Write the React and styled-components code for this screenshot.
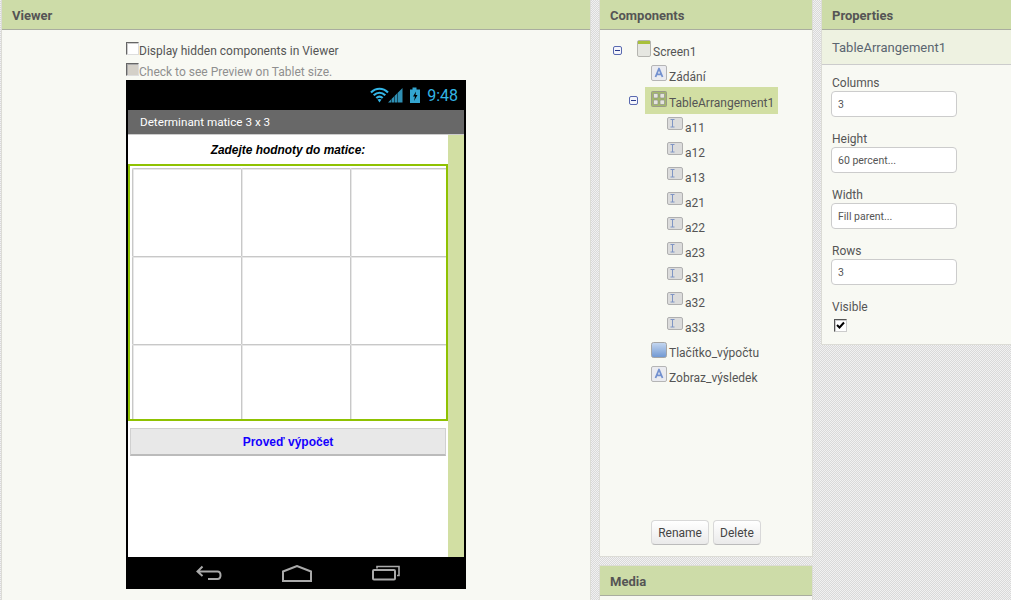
import React from 'react';
import styled, { createGlobalStyle } from 'styled-components';

const GlobalStyle = createGlobalStyle`
  html, body {
    margin: 0;
    height: 100%;
    overflow: hidden;
  }
  body {
    font-family: Roboto, "Liberation Sans", sans-serif;
    color: #555;
    background: repeating-conic-gradient(#d9d9d9 0 25%, #f1f1f1 0 50%) 0 0 / 2px 2px;
  }
`;

const Page = styled.div`
  display: flex;
  height: 600px;
  width: 1011px;
  overflow: hidden;
  padding-left: 2px;
  box-sizing: border-box;
`;

const Column = styled.div`
  width: ${(props) => props.width}px;
  margin-right: ${(props) => props.gap || 0}px;
  flex-shrink: 0;
  display: flex;
  flex-direction: column;
`;

const Panel = styled.section`
  display: flex;
  flex-direction: column;
  flex: ${(props) => (props.grow ? '1' : 'none')};
  height: ${(props) => (props.height ? `${props.height}px` : 'auto')};
  margin-bottom: ${(props) => props.bottom || 0}px;
  background: #f8f9f3;
  box-shadow: 0 0 0 1px #dcdcd6;
`;

const PanelHeader = styled.h2`
  margin: 0;
  height: 29px;
  line-height: 31px;
  padding-left: 10px;
  flex-shrink: 0;
  font-size: 13px;
  font-weight: 700;
  color: #555;
  background: #cddca8;
  border-bottom: 1px solid #a9ad9f;
`;

const ViewerBody = styled.div`
  flex: 1;
  padding: 12px 0 0 124px;
`;

const CheckLine = styled.div`
  display: flex;
  align-items: flex-start;
  height: 21px;
  font-size: 12px;
  line-height: 19px;
  color: ${(props) => (props.disabled ? '#8f8f8f' : '#555')};
`;

const Box = styled.span`
  display: block;
  box-sizing: border-box;
  width: 13px;
  height: 13px;
  flex-shrink: 0;
  background: ${(props) => (props.disabled ? '#d4d0c8' : '#fff')};
  border: 1px solid;
  border-color: #666 #ddd #ddd #666;
  box-shadow: inset 1px 1px 0 ${(props) => (props.disabled ? '#aaa' : '#ccc')};
`;

const Phone = styled.div`
  width: 340px;
  height: 509px;
  box-sizing: border-box;
  padding: 0 2px;
  background: #000;
  display: flex;
  flex-direction: column;
  margin-top: -4px;
`;

const StatusBar = styled.div`
  height: 30px;
  flex-shrink: 0;
  display: flex;
  align-items: center;
  justify-content: flex-end;
  padding-right: 6px;
  color: #33b5e5;
  font-size: 16px;
  gap: 6px;
`;

const TitleBar = styled.div`
  height: 24px;
  line-height: 25px;
  flex-shrink: 0;
  padding-left: 12px;
  background: #686868;
  color: #fff;
  font-size: 11.7px;
  border-bottom: 1px solid #ccc;
`;

const Screen = styled.div`
  flex: 1;
  display: flex;
  min-height: 0;
  background: #fff;
`;

const ScreenContent = styled.div`
  width: 320px;
`;

const ScrollStrip = styled.div`
  flex: 1;
  background: #d2dfa3;
`;

const Prompt = styled.div`
  height: 29px;
  text-align: center;
  font: italic 700 11.9px/31px "Liberation Sans", Arial, sans-serif;
  color: #000;
`;

const MatrixFrame = styled.div`
  box-sizing: border-box;
  height: 257px;
  padding: 2px 0 0 2px;
  border: 2px solid #8fc202;
  display: grid;
  grid-template-columns: 109px 109px 96px;
  grid-template-rows: 88px 88px 75px;
`;

const Cell = styled.div`
  background: #fff;
  border-top: 1px solid #c8c8c8;
  border-left: 1px solid #c8c8c8;
  border-radius: 2px 0 0 0;
  box-shadow: inset 0 1px 0 #e8e8e8, inset 1px 0 0 #e8e8e8;
`;

const ComputeButton = styled.div`
  box-sizing: border-box;
  width: 316px;
  height: 28px;
  margin: 7px 0 0 2px;
  background: #e8e8e8;
  border: 1px solid #d0d0d0;
  border-bottom: 2px solid #bbb;
  text-align: center;
  font: 700 12px/26px "Liberation Sans", Arial, sans-serif;
  color: #1400ff;
`;

const NavBar = styled.div`
  height: 32px;
  margin: 0 -2px;
  flex-shrink: 0;
  background: #000;
  display: flex;
  align-items: center;
  padding-left: 70px;
  gap: 59px;
`;

const ComponentsBody = styled.div`
  flex: 1;
  display: flex;
  flex-direction: column;
  padding-top: 8px;
`;

const Tree = styled.div`
  flex: 1;
`;

const TreeRow = styled.div`
  display: flex;
  align-items: center;
  height: 25px;
  padding-left: ${(props) => props.indent}px;
`;

const Toggle = styled.span`
  box-sizing: border-box;
  width: 9px;
  height: 9px;
  margin-right: ${(props) => props.after}px;
  border: 1px solid #5a6ab0;
  border-radius: 2px;
  background: #f4f5fb;
  display: flex;
  align-items: center;
  justify-content: center;
  flex-shrink: 0;
  &::after {
    content: '';
    width: 5px;
    height: 1px;
    background: #2a3a8a;
  }
`;

const NodeBody = styled.div`
  display: flex;
  align-items: flex-start;
  box-sizing: border-box;
  height: ${(props) => (props.selected ? '27px' : '25px')};
  padding-left: ${(props) => (props.selected ? '6px' : '0')};
  padding-top: ${(props) => (props.selected ? '4px' : '2px')};
  width: ${(props) => (props.selected ? '133px' : 'auto')};
  background: ${(props) => (props.selected ? '#d2dfa3' : 'transparent')};
  font-size: 12px;
  color: #555;
  gap: 2px;
`;

const NodeIcon = styled.span`
  display: flex;
  margin-top: ${(props) => props.top || 0}px;
`;

const NodeLabel = styled.span`
  line-height: 14px;
  margin-top: ${(props) => props.top || 5}px;
`;

const ActionRow = styled.div`
  display: flex;
  justify-content: center;
  gap: 4px;
  height: 36px;
`;

const ActionButton = styled.button`
  height: 25px;
  padding: 0 6px;
  font: 12px Roboto, sans-serif;
  color: #444;
  background: linear-gradient(#fff, #eaeaea);
  border: 1px solid #d8d8d8;
  border-bottom-color: #bbb;
  border-radius: 4px;
`;

const SubHeader = styled.div`
  height: 34px;
  line-height: 35px;
  padding-left: 10px;
  font-size: 13px;
  color: #5a6570;
  background: #eef2e1;
  border-bottom: 1px solid #ccc;
`;

const PropertyList = styled.div`
  padding: 10px 0 0 10px;
`;

const PropertyLabel = styled.div`
  font-size: 12px;
  line-height: 16px;
`;

const PropertyBox = styled.input`
  display: block;
  box-sizing: border-box;
  width: 126px;
  height: 26px;
  margin: 0 0 14px -1px;
  padding: 0 6px;
  background: #fff;
  border: 1px solid #ccc;
  border-radius: 4px;
  font: 10.5px Roboto, sans-serif;
  color: #555;
  outline: none;
`;

const VisibleBox = styled(Box)`
  margin: 4px 0 0 2px;
  border-color: #555 #ccc #ccc #555;
  display: flex;
`;

const CheckMark = () => (
  <svg width="11" height="11" viewBox="0 0 11 11">
    <path d="M2 5l2.500 2.500L9 2.500" fill="none" stroke="#000" strokeWidth="2" />
  </svg>
);

const ScreenIcon = () => (
  <svg width="14" height="17" viewBox="0 0 14 17">
    <rect x=".5" y=".5" width="13" height="16" rx="1.5" fill="#e6e7e1" stroke="#b5b5b0" />
    <rect x="1" y="1" width="12" height="3" fill="#a8c03a" />
  </svg>
);

const LabelIcon = () => (
  <svg width="16" height="16" viewBox="0 0 16 16">
    <rect x=".5" y=".5" width="15" height="15" rx="1.5" fill="#eaebf0" stroke="#b5b5b5" />
    <path d="M4.500 12L8 3.500 11.500 12M5.800 9.300h4.400" fill="none" stroke="#7391cf" strokeWidth="1.800" strokeLinejoin="round" />
  </svg>
);

const TableIcon = () => (
  <svg width="16" height="16" viewBox="0 0 16 16">
    <rect x=".5" y=".5" width="15" height="15" rx="1" fill="#a3b86a" stroke="#9a9a8a" />
    <rect x="2.500" y="2.500" width="4.500" height="4.500" rx="1" fill="#e4e4dc" stroke="#888" strokeWidth=".6" />
    <rect x="9" y="2.500" width="4.500" height="4.500" rx="1" fill="#e4e4dc" stroke="#888" strokeWidth=".6" />
    <rect x="2.500" y="9" width="4.500" height="4.500" rx="1" fill="#e4e4dc" stroke="#888" strokeWidth=".6" />
    <rect x="9" y="9" width="4.500" height="4.500" rx="1" fill="#e4e4dc" stroke="#888" strokeWidth=".6" />
  </svg>
);

const TextBoxIcon = () => (
  <svg width="16" height="13" viewBox="0 0 16 13">
    <rect x=".5" y=".5" width="15" height="12" rx="1.5" fill="#dcdcdc" stroke="#b0b0b0" />
    <path d="M3.500 2.500h4M3.500 10h4M5.500 2.500V10" fill="none" stroke="#7f95c4" strokeWidth="1" />
  </svg>
);

const ButtonIcon = () => (
  <svg width="16" height="16" viewBox="0 0 16 16">
    <defs>
      <linearGradient id="btnFill" x1="0" y1="0" x2="0" y2="1">
        <stop offset="0" stopColor="#c6d8f0" />
        <stop offset="1" stopColor="#6f97d2" />
      </linearGradient>
    </defs>
    <rect x=".5" y=".5" width="15" height="15" rx="2" fill="url(#btnFill)" stroke="#a5a5a5" />
  </svg>
);

const StatusIcons = () => (
  <svg width="51" height="16" viewBox="0 0 51 16">
    <path d="M1 5.500c5-5 12-5 17 0M3.700 8.300c3.500-3.300 8.100-3.300 11.600 0M6.300 11c2-1.700 4.400-1.700 6.400 0" fill="none" stroke="#33b5e5" strokeWidth="2.200" />
    <path d="M7.500 12.500c1.200-.7 2.800-.7 4 0L9.500 15.500z" fill="#33b5e5" />
    <path d="M18 15.500l3-3v3zM21.500 15.500V12l2.500-2.500v6zM24.500 15.500V9l2.500-2.500v9zM27.500 15.500V6l5-5v14.500z" fill="#2f8fb3" />
    <path d="M40 2.500h2.500V.5h4v2H50V16H40z" fill="#33a5d0" />
    <path d="M46 4.500l-3 5h2l-1 4.500 3.500-6h-2z" fill="#000" />
  </svg>
);

const BackIcon = () => (
  <svg width="27" height="16" viewBox="0 0 27 16">
    <path d="M6.500 1.500L1.500 6.500l5 4.500M1.500 6.500h20c4 0 4 7.500 0 7.500H12" fill="none" stroke="#aaa" strokeWidth="2" />
  </svg>
);

const HomeIcon = () => (
  <svg width="31" height="17" viewBox="0 0 31 17">
    <path d="M1 6.500L15 1l14 5.500V16H1z" fill="none" stroke="#aaa" strokeWidth="2" />
  </svg>
);

const RecentIcon = () => (
  <svg width="28" height="16" viewBox="0 0 28 16">
    <path d="M5 3.500V1.500h22v9h-2" fill="none" stroke="#aaa" strokeWidth="1.600" />
    <rect x="1" y="5" width="22" height="9.500" rx="1" fill="none" stroke="#aaa" strokeWidth="2" />
  </svg>
);

const textBoxes = ['a11', 'a12', 'a13', 'a21', 'a22', 'a23', 'a31', 'a32', 'a33'];

const properties = [
  { name: 'Columns', value: '3' },
  { name: 'Height', value: '60 percent...' },
  { name: 'Width', value: 'Fill parent...' },
  { name: 'Rows', value: '3' },
];

export default function App() {
  return (
    <>
      <GlobalStyle />
      <Page>
        <Column width={588} gap={10}>
          <Panel grow>
            <PanelHeader>Viewer</PanelHeader>
            <ViewerBody>
              <CheckLine>
                <Box />
                Display hidden components in Viewer
              </CheckLine>
              <CheckLine disabled>
                <Box disabled />
                Check to see Preview on Tablet size.
              </CheckLine>
              <Phone>
                <StatusBar>
                  <StatusIcons />
                  9:48
                </StatusBar>
                <TitleBar>Determinant matice 3 x 3</TitleBar>
                <Screen>
                  <ScreenContent>
                    <Prompt>Zadejte hodnoty do matice:</Prompt>
                    <MatrixFrame>
                      {textBoxes.map((name) => (
                        <Cell key={name} />
                      ))}
                    </MatrixFrame>
                    <ComputeButton>Proveď výpočet</ComputeButton>
                  </ScreenContent>
                  <ScrollStrip />
                </Screen>
                <NavBar>
                  <BackIcon />
                  <HomeIcon />
                  <RecentIcon />
                </NavBar>
              </Phone>
            </ViewerBody>
          </Panel>
        </Column>

        <Column width={212} gap={10}>
          <Panel height={556} bottom={10}>
            <PanelHeader>Components</PanelHeader>
            <ComponentsBody>
              <Tree>
                <TreeRow indent={13}>
                  <Toggle after={15} />
                  <NodeBody>
                    <NodeIcon><ScreenIcon /></NodeIcon>
                    <NodeLabel>Screen1</NodeLabel>
                  </NodeBody>
                </TreeRow>
                <TreeRow indent={51}>
                  <NodeBody>
                    <NodeIcon><LabelIcon /></NodeIcon>
                    <NodeLabel>Zádání</NodeLabel>
                  </NodeBody>
                </TreeRow>
                <TreeRow indent={29}>
                  <Toggle after={7} />
                  <NodeBody selected>
                    <NodeIcon><TableIcon /></NodeIcon>
                    <NodeLabel>TableArrangement1</NodeLabel>
                  </NodeBody>
                </TreeRow>
                {textBoxes.map((name) => (
                  <TreeRow key={name} indent={67}>
                    <NodeBody>
                      <NodeIcon top={2}><TextBoxIcon /></NodeIcon>
                      <NodeLabel top={6}>{name}</NodeLabel>
                    </NodeBody>
                  </TreeRow>
                ))}
                <TreeRow indent={51}>
                  <NodeBody>
                    <NodeIcon top={2}><ButtonIcon /></NodeIcon>
                    <NodeLabel top={6}>Tlačítko_výpočtu</NodeLabel>
                  </NodeBody>
                </TreeRow>
                <TreeRow indent={51}>
                  <NodeBody>
                    <NodeIcon top={1}><LabelIcon /></NodeIcon>
                    <NodeLabel top={6}>Zobraz_výsledek</NodeLabel>
                  </NodeBody>
                </TreeRow>
              </Tree>
              <ActionRow>
                <ActionButton>Rename</ActionButton>
                <ActionButton>Delete</ActionButton>
              </ActionRow>
            </ComponentsBody>
          </Panel>
          <Panel grow>
            <PanelHeader>Media</PanelHeader>
          </Panel>
        </Column>

        <Column width={189}>
          <Panel height={344}>
            <PanelHeader>Properties</PanelHeader>
            <SubHeader>TableArrangement1</SubHeader>
            <PropertyList>
              {properties.map((prop) => (
                <div key={prop.name}>
                  <PropertyLabel>{prop.name}</PropertyLabel>
                  <PropertyBox readOnly value={prop.value} />
                </div>
              ))}
              <PropertyLabel>Visible</PropertyLabel>
              <VisibleBox><CheckMark /></VisibleBox>
            </PropertyList>
          </Panel>
        </Column>
      </Page>
    </>
  );
}
